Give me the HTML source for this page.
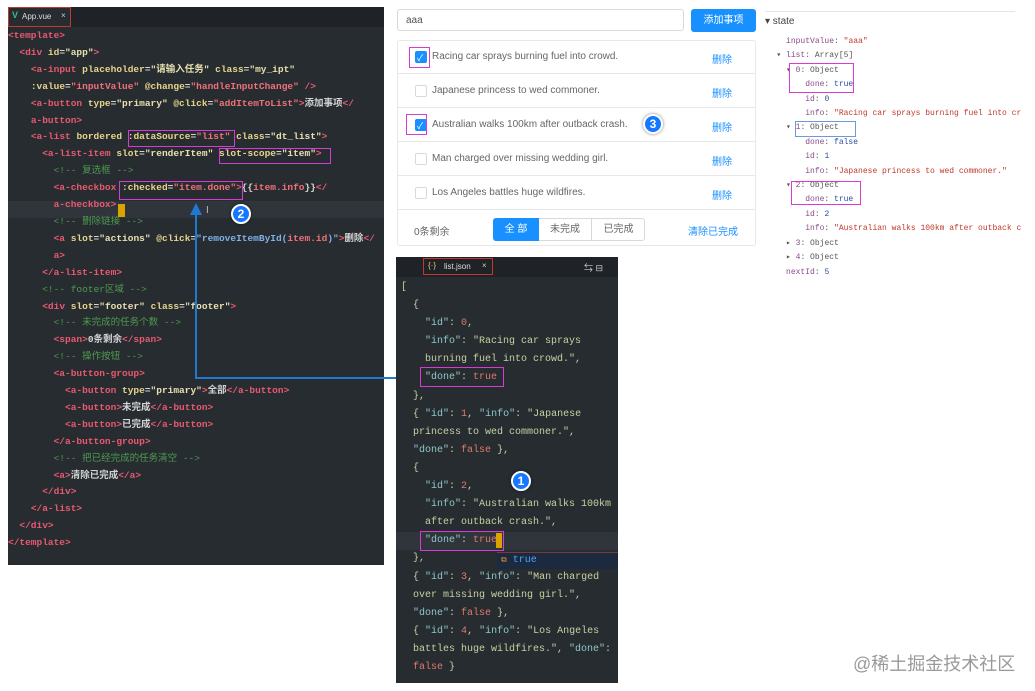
<!DOCTYPE html>
<html><head><meta charset="utf-8">
<style>
*{margin:0;padding:0;box-sizing:border-box}
body{width:1035px;height:691px;background:#fff;position:relative;overflow:hidden;font-family:"Liberation Sans","Noto Sans CJK SC",sans-serif}
.abs{position:absolute}
#ed{left:8px;top:7px;width:376px;height:558px;background:#272c31}
#ed .tab{position:absolute;left:0;top:0;width:376px;height:20px;background:#1f2327}
#ed pre{position:absolute;left:0;top:21px;font-family:"Liberation Mono","Noto Sans CJK SC",monospace;font-size:9.5px;line-height:16.9px;color:#d4d4d4;white-space:pre;font-weight:bold}
.t{color:#e8596f}.a{color:#e6d58a}.s{color:#e8e0b0}.c{color:#4e9a4e;font-weight:normal}.v{color:#f07178}.f{color:#7fb0e8}.p{color:#999}
.box{position:absolute;border:1.5px solid #d63bd6}
#js{left:396px;top:257px;width:222px;height:426px;background:#272c31}
#js .tab{position:absolute;left:0;top:0;width:222px;height:20px;background:#1f2327}
#js pre{position:absolute;left:5px;top:22px;font-family:"Liberation Mono",monospace;font-size:10px;line-height:18.1px;color:#c8d0a0;white-space:pre}
.k{color:#8fc7c7}.n{color:#e07a6a}.b{color:#e07a6a}.w{color:#c8d0a0}
#st{left:762px;top:35px;font-family:"Liberation Mono",monospace;font-size:8px;line-height:14.4px;color:#555;white-space:pre}
.sk{color:#8a4b8a}.sv{color:#c0392b}.sb{color:#2a4ea0}
.badge{position:absolute;width:20px;height:20px;border-radius:50%;background:#1677ff;border:2px solid #fff;box-shadow:0 0 3px rgba(0,0,0,.5);color:#fff;font-weight:bold;font-size:12px;text-align:center;line-height:16px}
.row{position:absolute;left:397px;width:359px;height:34px;border-bottom:1px solid #e8e8e8;font-size:10px;color:#666}
.cb{position:absolute;left:18px;top:11px;width:12px;height:12px;border:1px solid #d9d9d9;border-radius:2px;background:#fff}
.cb.on{background:#1890ff;border-color:#1890ff}
.row .tx{position:absolute;left:35px;top:11px}
.row .del{position:absolute;left:315px;top:11px;color:#1890ff}
</style></head><body>

<div id="ed" class="abs">
<div class="tab"></div>
<div class="abs" style="left:0;top:0;width:63px;height:20px;border:1px solid #c0392b;background:#272c31"></div>
<div class="abs" style="left:4px;top:3px;font-size:9px;color:#41b883;font-weight:bold">V</div>
<div class="abs" style="left:14px;top:5px;font-size:8px;color:#ddd">App.vue</div>
<div class="abs" style="left:53px;top:4px;font-size:8px;color:#ccc">×</div>
<div class="abs" style="left:0;top:194px;width:376px;height:17px;background:#2f353b"></div>
<pre><span class="t">&lt;template&gt;</span>
  <span class="t">&lt;div</span> <span class="a">id</span>=<span class="s">"app"</span><span class="t">&gt;</span>
    <span class="t">&lt;a-input</span> <span class="a">placeholder</span>=<span class="s">"请输入任务"</span> <span class="a">class</span>=<span class="s">"my_ipt"</span>
    <span class="a">:value</span>=<span class="v">"inputValue"</span> <span class="a">@change</span>=<span class="v">"handleInputChange"</span> <span class="t">/&gt;</span>
    <span class="t">&lt;a-button</span> <span class="a">type</span>=<span class="s">"primary"</span> <span class="a">@click</span>=<span class="v">"addItemToList"</span><span class="t">&gt;</span>添加事项<span class="t">&lt;/</span>
    <span class="t">a-button&gt;</span>
    <span class="t">&lt;a-list</span> <span class="a">bordered</span> <span class="a">:dataSource</span>=<span class="v">"list"</span> <span class="a">class</span>=<span class="s">"dt_list"</span><span class="t">&gt;</span>
      <span class="t">&lt;a-list-item</span> <span class="a">slot</span>=<span class="s">"renderItem"</span> <span class="a">slot-scope</span>=<span class="s">"item"</span><span class="t">&gt;</span>
        <span class="c">&lt;!-- 复选框 --&gt;</span>
        <span class="t">&lt;a-checkbox</span> <span class="a">:checked</span>=<span class="v">"item.done"</span><span class="t">&gt;</span>{{<span class="v">item.info</span>}}<span class="t">&lt;/</span>
        <span class="t">a-checkbox&gt;</span>
        <span class="c">&lt;!-- 删除链接 --&gt;</span>
        <span class="t">&lt;a</span> <span class="a">slot</span>=<span class="s">"actions"</span> <span class="a">@click</span>=<span class="f">"removeItemById(<span class="v">item.id</span>)"</span><span class="t">&gt;</span>删除<span class="t">&lt;/</span>
        <span class="t">a&gt;</span>
      <span class="t">&lt;/a-list-item&gt;</span>
      <span class="c">&lt;!-- footer区域 --&gt;</span>
      <span class="t">&lt;div</span> <span class="a">slot</span>=<span class="s">"footer"</span> <span class="a">class</span>=<span class="s">"footer"</span><span class="t">&gt;</span>
        <span class="c">&lt;!-- 未完成的任务个数 --&gt;</span>
        <span class="t">&lt;span&gt;</span>0条剩余<span class="t">&lt;/span&gt;</span>
        <span class="c">&lt;!-- 操作按钮 --&gt;</span>
        <span class="t">&lt;a-button-group&gt;</span>
          <span class="t">&lt;a-button</span> <span class="a">type</span>=<span class="s">"primary"</span><span class="t">&gt;</span>全部<span class="t">&lt;/a-button&gt;</span>
          <span class="t">&lt;a-button&gt;</span>未完成<span class="t">&lt;/a-button&gt;</span>
          <span class="t">&lt;a-button&gt;</span>已完成<span class="t">&lt;/a-button&gt;</span>
        <span class="t">&lt;/a-button-group&gt;</span>
        <span class="c">&lt;!-- 把已经完成的任务清空 --&gt;</span>
        <span class="t">&lt;a&gt;</span>清除已完成<span class="t">&lt;/a&gt;</span>
      <span class="t">&lt;/div&gt;</span>
    <span class="t">&lt;/a-list&gt;</span>
  <span class="t">&lt;/div&gt;</span>
<span class="t">&lt;/template&gt;</span></pre>
<div class="abs" style="left:110px;top:197px;width:7px;height:13px;background:#d9a400"></div>
</div>
<div class="box" style="left:128px;top:130px;width:107px;height:17px"></div>
<div class="box" style="left:219px;top:148px;width:112px;height:16px"></div>
<div class="box" style="left:119px;top:181px;width:124px;height:19px"></div>

<!-- arrow -->
<div class="abs" style="left:195px;top:210px;width:1.5px;height:168px;background:#1f78d1"></div>
<div class="abs" style="left:195px;top:377px;width:226px;height:1.5px;background:#1f78d1"></div>
<div class="abs" style="left:190px;top:203px;width:0;height:0;border-left:6px solid transparent;border-right:6px solid transparent;border-bottom:12px solid #1f78d1"></div>
<div class="abs" style="left:206px;top:205px;font-size:10px;color:#bbb">I</div>
<div class="badge" style="left:231px;top:204px">2</div>

<!-- app -->
<div class="abs" style="left:397px;top:9px;width:287px;height:22px;border:1px solid #d9d9d9;border-radius:3px;font-size:10px;color:#555;padding:5px 8px">aaa</div>
<div class="abs" style="left:691px;top:9px;width:65px;height:23px;background:#1890ff;border-radius:3px;color:#fff;font-size:10px;text-align:center;line-height:23px">添加事项</div>
<div class="abs" style="left:397px;top:40px;width:359px;height:206px;border:1px solid #e8e8e8;border-radius:3px"></div>
<div class="row" style="top:40px"><div class="cb on"></div><div class="tx">Racing car sprays burning fuel into crowd.</div><div class="del">删除</div></div>
<div class="row" style="top:74px"><div class="cb"></div><div class="tx">Japanese princess to wed commoner.</div><div class="del">删除</div></div>
<div class="row" style="top:108px"><div class="cb on"></div><div class="tx">Australian walks 100km after outback crash.</div><div class="del">删除</div></div>
<div class="row" style="top:142px"><div class="cb"></div><div class="tx">Man charged over missing wedding girl.</div><div class="del">删除</div></div>
<div class="row" style="top:176px"><div class="cb"></div><div class="tx">Los Angeles battles huge wildfires.</div><div class="del">删除</div></div>
<div class="abs" style="left:417px;top:51px;font-size:9px;color:#fff">✓</div>
<div class="abs" style="left:417px;top:119px;font-size:9px;color:#fff">✓</div>
<div class="box" style="left:409px;top:47px;width:21px;height:21px"></div>
<div class="box" style="left:406px;top:114px;width:21px;height:21px"></div>
<div class="badge" style="left:643px;top:114px">3</div>
<div class="abs" style="left:414px;top:223px;font-size:10px;color:#666">0条剩余</div>
<div class="abs" style="left:493px;top:218px;width:152px;height:23px;border:1px solid #d9d9d9;border-radius:3px;font-size:10px;color:#666">
<div class="abs" style="left:-1px;top:-1px;width:46px;height:23px;background:#1890ff;color:#fff;text-align:center;line-height:23px;border-radius:3px 0 0 3px">全 部</div>
<div class="abs" style="left:45px;top:0;width:53px;height:21px;border-right:1px solid #d9d9d9;text-align:center;line-height:21px">未完成</div>
<div class="abs" style="left:98px;top:0;width:53px;height:21px;text-align:center;line-height:21px">已完成</div>
</div>
<div class="abs" style="left:688px;top:223px;font-size:10px;color:#1890ff">清除已完成</div>

<!-- json -->
<div id="js" class="abs">
<div class="tab"></div>
<div class="abs" style="left:27px;top:1px;width:70px;height:17px;border:1px solid #c0392b"></div>
<div class="abs" style="left:32px;top:4px;font-size:8px;color:#e5c07b">{·}</div>
<div class="abs" style="left:48px;top:5px;font-size:8px;color:#ddd">list.json</div>
<div class="abs" style="left:86px;top:4px;font-size:8px;color:#ccc">×</div>
<div class="abs" style="left:188px;top:4px;font-size:9px;color:#ccc">⇆ ⊟</div>
<div class="abs" style="left:0;top:275px;width:222px;height:18px;background:#2f353b"></div>
<pre>[
  {
    <span class="k">"id"</span>: <span class="n">0</span>,
    <span class="k">"info"</span>: "Racing car sprays
    burning fuel into crowd.",
    <span class="k">"done"</span>: <span class="b">true</span>
  },
  { <span class="k">"id"</span>: <span class="n">1</span>, <span class="k">"info"</span>: "Japanese
  princess to wed commoner.",
  <span class="k">"done"</span>: <span class="b">false</span> },
  {
    <span class="k">"id"</span>: <span class="n">2</span>,
    <span class="k">"info"</span>: "Australian walks 100km
    after outback crash.",
    <span class="k">"done"</span>: <span class="b">true</span>
  },
  { <span class="k">"id"</span>: <span class="n">3</span>, <span class="k">"info"</span>: "Man charged
  over missing wedding girl.",
  <span class="k">"done"</span>: <span class="b">false</span> },
  { <span class="k">"id"</span>: <span class="n">4</span>, <span class="k">"info"</span>: "Los Angeles
  battles huge wildfires.", <span class="k">"done"</span>:
  <span class="b">false</span> }</pre>
<div class="abs" style="left:100px;top:276px;width:6px;height:15px;background:#d9a400"></div>
<div class="abs" style="left:101px;top:295px;width:121px;height:17px;background:#1b2a3e;border-top:1px solid #7a3a3a;font-size:10px;color:#4aa3ff;font-family:'Liberation Mono',monospace;padding-left:4px;line-height:16px"><span style="color:#e58a3a;font-size:8px">⧉</span> true</div>
</div>
<div class="box" style="left:420px;top:367px;width:84px;height:20px"></div>
<div class="box" style="left:420px;top:531px;width:84px;height:20px"></div>
<div class="badge" style="left:511px;top:471px">1</div>

<!-- state -->
<div class="abs" style="left:765px;top:11px;width:250px;height:1px;background:#e5e5e5"></div>
<div class="abs" style="left:765px;top:16px;font-size:10px;color:#444">▾ state</div>
<div id="st" class="abs">     <span class="sk">inputValue</span>: <span class="sv">"aaa"</span>
   ▾ <span class="sk">list</span>: Array[5]
     ▾ <span class="sk">0</span>: Object
         <span class="sk">done</span>: <span class="sb">true</span>
         <span class="sk">id</span>: <span class="sb">0</span>
         <span class="sk">info</span>: <span class="sv">"Racing car sprays burning fuel into cr</span>
     ▾ <span class="sk">1</span>: Object
         <span class="sk">done</span>: <span class="sb">false</span>
         <span class="sk">id</span>: <span class="sb">1</span>
         <span class="sk">info</span>: <span class="sv">"Japanese princess to wed commoner."</span>
     ▾ <span class="sk">2</span>: Object
         <span class="sk">done</span>: <span class="sb">true</span>
         <span class="sk">id</span>: <span class="sb">2</span>
         <span class="sk">info</span>: <span class="sv">"Australian walks 100km after outback c</span>
     ▸ <span class="sk">3</span>: Object
     ▸ <span class="sk">4</span>: Object
     <span class="sk">nextId</span>: <span class="sb">5</span></div>
<div class="box" style="left:789px;top:63px;width:65px;height:30px"></div>
<div class="abs" style="left:795px;top:121px;width:61px;height:16px;border:1px solid #6a9bd8"></div>
<div class="box" style="left:791px;top:181px;width:70px;height:24px"></div>

<div class="abs" style="left:853px;top:650px;font-size:18px;color:#999">@稀土掘金技术社区</div>
</body></html>
